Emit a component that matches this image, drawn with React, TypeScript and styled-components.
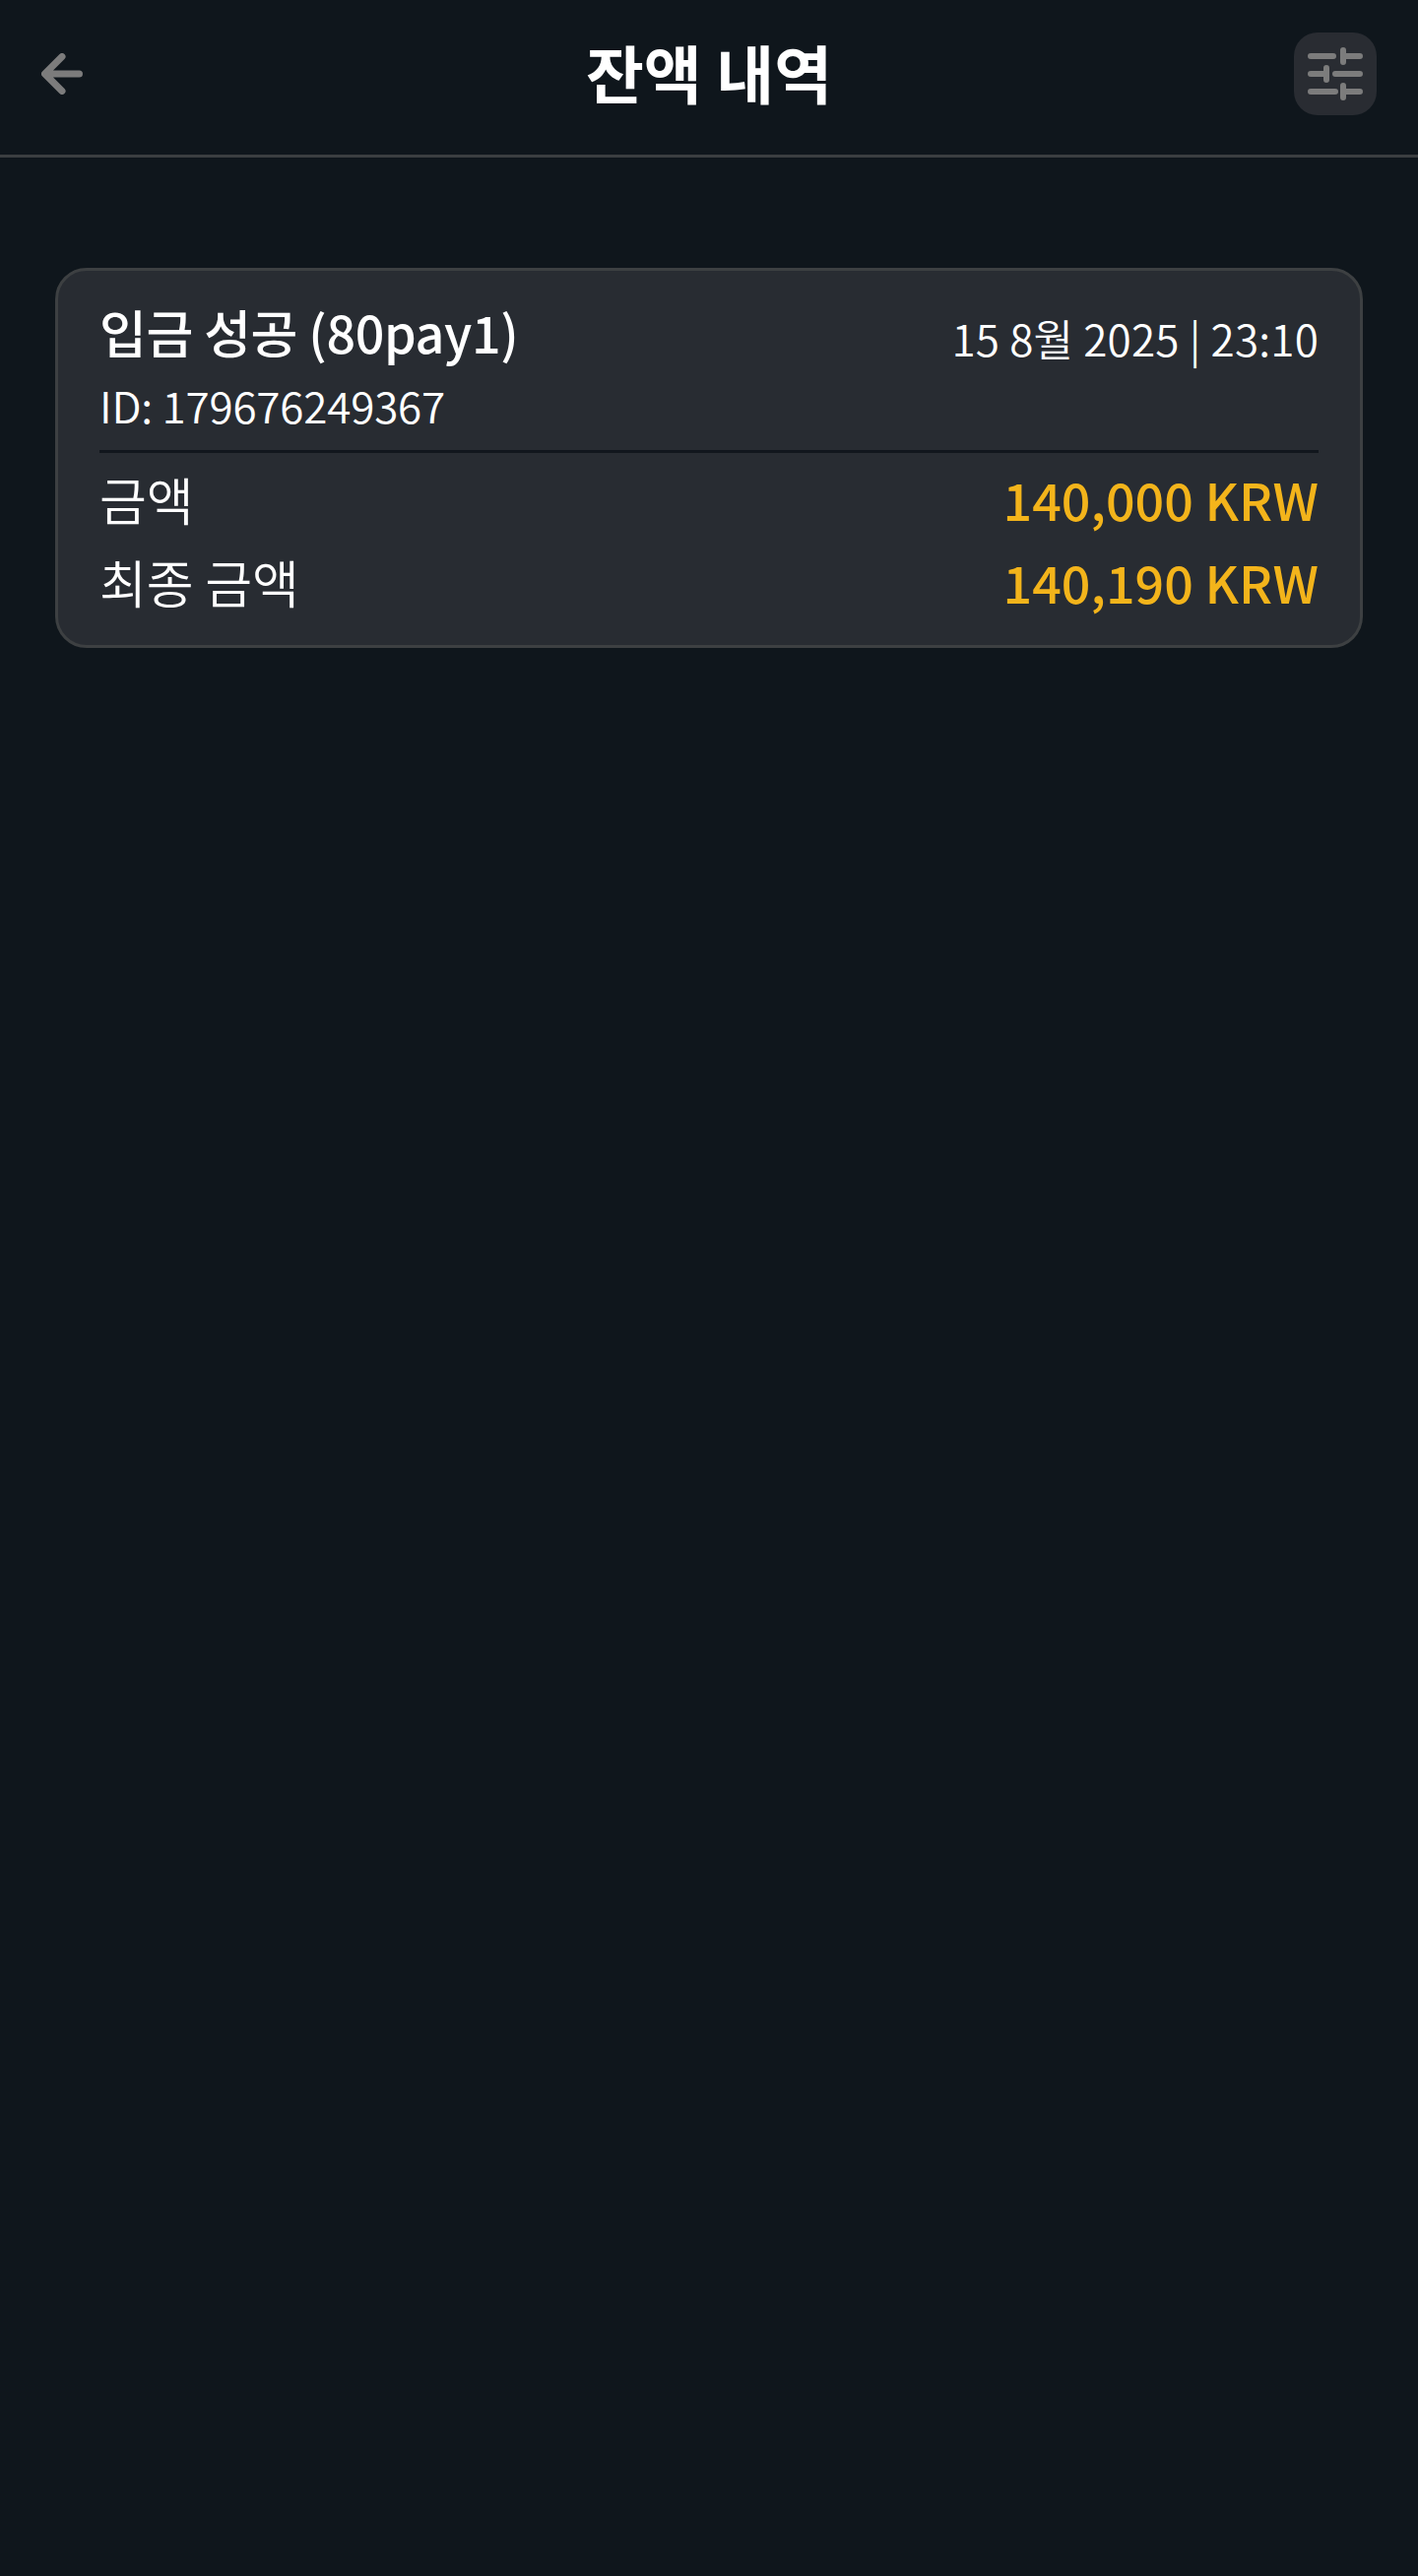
import React from "react";
import styled, { createGlobalStyle } from "styled-components";

const GlobalStyle = createGlobalStyle`
  html, body {
    margin: 0;
    padding: 0;
    background: #0f161c;
  }
  body {
    font-family: "Noto Sans CJK KR", "Noto Sans", sans-serif;
    color: #fff;
  }
`;

const Page = styled.div`
  min-height: 2616px;
  background: #0f161c;
`;

const Header = styled.header`
  height: 157px;
  display: grid;
  grid-template-columns: 1fr auto 1fr;
  align-items: center;
  padding: 0 42px;
  border-bottom: 3px solid #3b3e41;
`;

const BackButton = styled.button`
  justify-self: start;
  width: 42px;
  height: 42px;
  padding: 0;
  border: 0;
  background: none;
  display: block;
  margin-top: -8px;
`;

const Title = styled.h1`
  margin: -13px 0 0;
  font-size: 64px;
  line-height: 90px;
  font-weight: 700;
  color: #fff;
`;

const FilterButton = styled.button`
  justify-self: end;
  width: 84px;
  height: 84px;
  padding: 14px;
  border: 0;
  border-radius: 24px;
  background: #292c32;
  display: block;
  margin-top: -8px;
`;

const Content = styled.main`
  padding: 112px 56px 0;
`;

const Card = styled.section`
  height: 386px;
  box-sizing: border-box;
  padding: 26px 42px 0;
  border: 3px solid #3d4042;
  border-radius: 32px;
  background: #282c32;
`;

const TopRow = styled.div`
  display: flex;
  justify-content: space-between;
  align-items: flex-start;
`;

const CardTitle = styled.h2`
  margin: 0;
  font-size: 52px;
  line-height: 72px;
  font-weight: 500;
  letter-spacing: -0.4px;
`;

const DateText = styled.div`
  font-size: 44px;
  line-height: 64px;
  margin-top: 10px;
  font-weight: 350;
  letter-spacing: 0.2px;
`;

const IdText = styled.div`
  font-size: 44px;
  line-height: 62px;
  font-weight: 350;
  margin-top: 5px;
  letter-spacing: -0.2px;
`;

const Divider = styled.div`
  height: 3px;
  background: #11161d;
  margin: 15px 0 4px;
`;

const AmountRow = styled.div`
  display: flex;
  justify-content: space-between;
  align-items: center;
  height: 84px;
`;

const AmountLabel = styled.span`
  font-size: 52px;
  font-weight: 350;
`;

const AmountValue = styled.span`
  font-size: 52px;
  font-weight: 500;
  color: #f3b41b;
`;

const BackIcon = () => (
  <svg width="42" height="42" viewBox="0 0 42 42" fill="none" stroke="#7c7c7c" strokeWidth="7" strokeLinecap="round" strokeLinejoin="round">
    <path d="M38.5 21H4M21 3.5 3.5 21 21 38.5" />
  </svg>
);

const FilterIcon = () => (
  <svg width="56" height="56" viewBox="0 0 56 56" fill="none" stroke="#7c7c7c" strokeWidth="6" strokeLinecap="round">
    <path d="M3 10h23M36 10h17M36 4v12" />
    <path d="M3 28h16M28 28h25M19 22v12" />
    <path d="M3 46h25M36 46h17M36 40v12" />
  </svg>
);

export default function App() {
  return (
    <Page>
      <GlobalStyle />
      <Header>
        <BackButton>
          <BackIcon />
        </BackButton>
        <Title>잔액 내역</Title>
        <FilterButton>
          <FilterIcon />
        </FilterButton>
      </Header>
      <Content>
        <Card>
          <TopRow>
            <CardTitle>입금 성공 (80pay1)</CardTitle>
            <DateText>15 8월 2025 | 23:10</DateText>
          </TopRow>
          <IdText>ID: 179676249367</IdText>
          <Divider />
          <AmountRow>
            <AmountLabel>금액</AmountLabel>
            <AmountValue>140,000 KRW</AmountValue>
          </AmountRow>
          <AmountRow>
            <AmountLabel>최종 금액</AmountLabel>
            <AmountValue>140,190 KRW</AmountValue>
          </AmountRow>
        </Card>
      </Content>
    </Page>
  );
}
